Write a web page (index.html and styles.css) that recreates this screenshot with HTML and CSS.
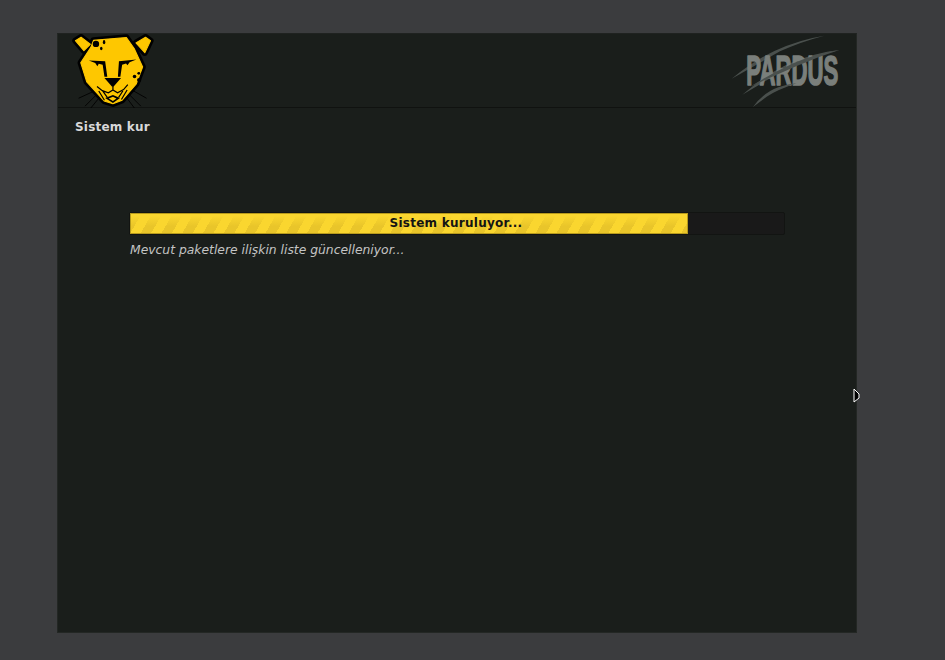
FILE: index.html

```html
<!DOCTYPE html>
<html lang="en">
<head>
    <meta charset="UTF-8">
    <meta name="viewport" content="width=device-width, initial-scale=1.0">
    <title>Sistem kur</title>
    <link rel="stylesheet" href="styles.css">
</head>
<body>
    <div class="window">
        <div class="header">
            <svg class="leopard" viewBox="66 35 254 209" width="90" height="74">
                <path class="whisker" d="M142 194L94 216M146 204L112 238M152 214L126 246M238 190L284 216M234 204L268 238M228 214L252 246"/>
                <g class="outline">
                    <path d="M84 54L100 44L126 64L108 82Z"/>
                    <path d="M255 60L282 44L296 54L280 88Z"/>
                    <path d="M135 53L228 45L250 76L274 128L256 176L216 222L190 232L165 224L116 170L99 116L128 72Z"/>
                </g>
                <g class="fur">
                    <path d="M84 54L100 44L126 64L108 82Z"/>
                    <path d="M255 60L282 44L296 54L280 88Z"/>
                    <path d="M135 53L228 45L250 76L274 128L256 176L216 222L190 232L165 224L116 170L99 116L128 72Z"/>
                </g>
                <circle class="ink" cx="142" cy="63" r="9"/>
                <ellipse class="ink" cx="165" cy="58" rx="3.5" ry="6"/>
                <ellipse class="ink" cx="157" cy="76" rx="3.5" ry="5"/>
                <circle class="ink" cx="251" cy="155" r="5"/>
                <circle class="ink" cx="263" cy="146" r="4"/>
                <circle class="ink" cx="264" cy="165" r="6"/>
                <path class="ink" d="M122 110L168 112L174 156L166 156L161 122L150 119L146 126L140 117Z"/>
                <path class="ink" d="M256 107L207 112L204 156L211 156L216 122L227 118L231 123L237 115Z"/>
                <path class="ink" d="M166 159L213 159L192 183L187 183Z"/>
                <path class="line" d="M190 182V194M145 183L160 195L177 201L190 193L203 201L220 192L232 178M150 196L166 222M160 194L174 214M230 193L214 220M218 196L206 214"/>
                <path class="ink" d="M168 216L190 207L210 216L190 230Z"/>
                <path class="fur-plain" d="M178 217L190 212L200 217L190 224Z"/>
            </svg>
            <svg class="brand" viewBox="15 24 336 219" width="112" height="73">
                <path class="scratch" d="M298 29Q225 48 165 76L20 158Q90 102 150 74Q225 40 298 29Z"/>
                <path class="scratch" d="M343 72Q270 88 205 116L52 206Q130 140 195 112Q270 80 343 72Z"/>
                <text class="brand-name" transform="translate(64 177) scale(0.52 1)">PARDUS</text>
                <path class="scratch" d="M343 72Q280 92 215 120L75 182Q140 142 205 112Q275 82 343 72Z"/>
                <path class="scratch" d="M215 172Q160 190 125 212L84 243Q115 200 160 184Q190 174 215 172Z"/>
            </svg>
        </div>
        <div class="title">Sistem kur</div>
        <div class="install">
            <div class="progress">
                <div class="progress-fill" style="width: 85.3%"></div>
                <span class="progress-label">Sistem kuruluyor...</span>
            </div>
            <p class="status">Mevcut paketlere ilişkin liste güncelleniyor...</p>
        </div>
    </div>
    <svg class="cursor" viewBox="0 0 8 15" width="8" height="15">
        <path d="M1 1L6 6V10L1 14Z" fill="#000" stroke="#fff" stroke-width="1"/>
    </svg>
</body>
</html>
```

FILE: styles.css

```css
html, body {
    height: 100%;
}
body {
    margin: 0;
    padding: 33px 0 0 57px;
    box-sizing: border-box;
    background: #3b3c3e;
    font-family: "DejaVu Sans", sans-serif;
    overflow: hidden;
}
.window {
    width: 798px;
    height: 598px;
    background: #1a1e1b;
    border: 1px solid #232724;
    border-top-color: #1f2220;
}
.header {
    height: 74px;
    box-sizing: border-box;
    border-bottom: 1px solid #101210;
    padding: 0 14px 0 11px;
    display: flex;
    justify-content: space-between;
    align-items: flex-start;
}
.leopard {
    display: block;
}
.outline path {
    fill: #000;
    stroke: #000;
    stroke-width: 18;
    stroke-linejoin: round;
}
.fur path {
    fill: #fec700;
    stroke: #fec700;
    stroke-width: 3;
    stroke-linejoin: round;
}
.fur-plain {
    fill: #fec700;
}
.ink {
    fill: #000;
}
.line {
    fill: none;
    stroke: #000;
    stroke-width: 3.5;
}
.whisker {
    fill: none;
    stroke: #000;
    stroke-width: 2.5;
    stroke-linecap: round;
}
.brand {
    display: block;
}
.scratch {
    fill: #4a504d;
}
.brand-name {
    font-family: "Liberation Sans", sans-serif;
    font-weight: bold;
    font-size: 128px;
    fill: #7a7f7b;
    stroke: #7a7f7b;
    stroke-width: 5;
    stroke-linejoin: round;
}
.title {
    margin: 12px 0 0 17px;
    font-size: 12px;
    line-height: 14px;
    font-weight: bold;
    letter-spacing: 0.2px;
    color: #d8d8d8;
}
.install {
    margin: 78px 71px 0 71px;
}
.progress {
    position: relative;
    height: 23px;
    box-sizing: border-box;
    background: #191919;
    border: 1px solid #121412;
    border-radius: 2px;
}
.progress-fill {
    height: 100%;
    box-sizing: border-box;
    border: 1px solid #b79a1c;
    background:
        linear-gradient(to bottom, #fad62f 10%, rgba(250, 214, 47, 0) 65%),
        repeating-linear-gradient(120deg, #e9c52a 0, #e9c52a 9px, #fad62f 9px, #fad62f 18px);
}
.progress-label {
    position: absolute;
    left: 0;
    right: 2px;
    top: 2px;
    text-align: center;
    font-size: 12px;
    line-height: 17px;
    font-weight: bold;
    letter-spacing: 0.25px;
    color: #141414;
}
.status {
    margin: 6px 0 0 1px;
    font-size: 12.35px;
    line-height: 18px;
    font-style: italic;
    color: #c4c4c4;
}
.cursor {
    position: absolute;
    left: 853px;
    top: 388px;
}
```
